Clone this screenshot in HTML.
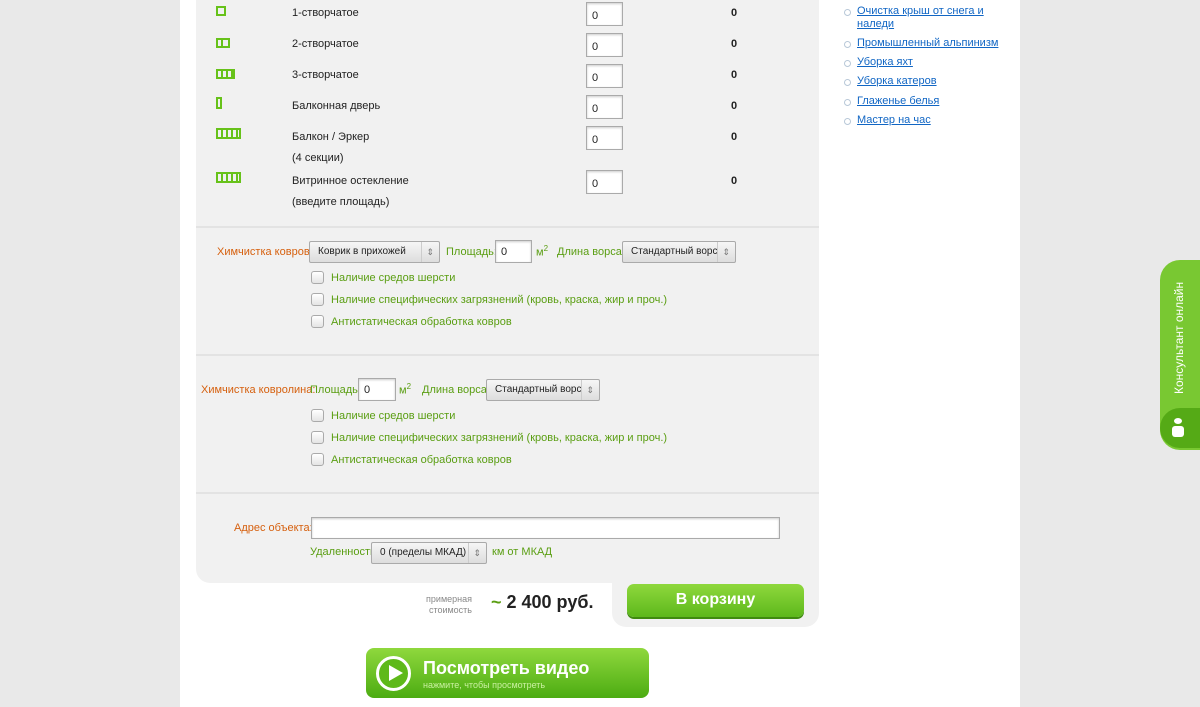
<!DOCTYPE html>
<html><head><meta charset="utf-8"><style>
*{margin:0;padding:0;box-sizing:border-box}
body{width:1200px;height:707px;overflow:hidden;background:#e9e9e9;font-family:"Liberation Sans",Arial,sans-serif;font-size:11px;color:#222;position:relative}
.a{position:absolute;white-space:nowrap}
.page{left:180px;top:0;width:840px;height:707px;background:#fff}
.panel{left:196px;top:0;width:623px;height:583px;background:#f1f1f1;border-radius:0 0 0 14px}
.tab{left:612px;top:570px;width:207px;height:57px;background:#f1f1f1;border-radius:0 0 14px 14px}
.inp{background:#fff;border:1px solid #aaa;box-shadow:inset 0 1px 2px #ccc;font-size:11px;padding:7px 5px}
.sel{background:linear-gradient(#f6f6f6,#ddd);border:1px solid #aaa;border-radius:2px;font-size:10px;padding:0 8px;line-height:20px;height:22px;color:#222}
.sel:after{content:"⇕";position:absolute;right:5px;top:0;font-size:9px;color:#777;border-left:1px solid #ccc;padding-left:4px}
.g{color:#5a9e12}.o{color:#d6600e}
.cb{width:13px;height:13px;border:1px solid #aaa;border-radius:3px;background:linear-gradient(#fff,#e4e4e4)}
.hr{left:196px;width:623px;height:2px;background:#e3e3e3}
.ic{border:2px solid #67c21a}
ul{list-style:none}
li{position:absolute;left:857px;font-size:11px;color:#1166c4;text-decoration:underline;line-height:13px}
li:before{content:"";position:absolute;left:-13px;top:4px;width:5px;height:5px;border:1px solid #b8c8d8;border-radius:50%}
</style></head><body>
<div class="a page"></div>
<div class="a panel"></div>
<div class="a tab"></div>

<div class="a ic" style="left:216px;top:6px;width:10px;height:10px"></div>
<div class="a ic" style="left:216px;top:38px;width:14px;height:10px;background:linear-gradient(90deg,transparent 3px,#67c21a 3px,#67c21a 5px,transparent 5px)"></div>
<div class="a ic" style="left:216px;top:69px;width:19px;height:10px;background:repeating-linear-gradient(90deg,transparent 0 3px,#67c21a 3px 5px)"></div>
<div class="a ic" style="left:216px;top:97px;width:6px;height:12px;border-width:2px"></div>
<div class="a ic" style="left:216px;top:128px;width:25px;height:11px;background:repeating-linear-gradient(90deg,transparent 0 3px,#67c21a 3px 5px)"></div>
<div class="a ic" style="left:216px;top:172px;width:25px;height:11px;background:repeating-linear-gradient(90deg,transparent 0 3px,#67c21a 3px 5px)"></div>

<div class="a" style="left:292px;top:7px">1-створчатое</div>
<div class="a" style="left:292px;top:38px">2-створчатое</div>
<div class="a" style="left:292px;top:69px">3-створчатое</div>
<div class="a" style="left:292px;top:100px">Балконная дверь</div>
<div class="a" style="left:292px;top:127px;line-height:21px">Балкон / Эркер<br>(4 секции)</div>
<div class="a" style="left:292px;top:171px;line-height:21px">Витринное остекление<br>(введите площадь)</div>

<div class="a inp" style="left:586px;top:2px;width:37px;height:24px">0</div>
<div class="a inp" style="left:586px;top:33px;width:37px;height:24px">0</div>
<div class="a inp" style="left:586px;top:64px;width:37px;height:24px">0</div>
<div class="a inp" style="left:586px;top:95px;width:37px;height:24px">0</div>
<div class="a inp" style="left:586px;top:126px;width:37px;height:24px">0</div>
<div class="a inp" style="left:586px;top:170px;width:37px;height:24px">0</div>
<div class="a" style="left:731px;top:7px;font-weight:bold">0</div>
<div class="a" style="left:731px;top:38px;font-weight:bold">0</div>
<div class="a" style="left:731px;top:69px;font-weight:bold">0</div>
<div class="a" style="left:731px;top:100px;font-weight:bold">0</div>
<div class="a" style="left:731px;top:131px;font-weight:bold">0</div>
<div class="a" style="left:731px;top:175px;font-weight:bold">0</div>

<div class="a hr" style="top:226px"></div>
<div class="a o" style="left:217px;top:246px">Химчистка ковров:</div>
<div class="a sel" style="left:309px;top:241px;width:131px">Коврик в прихожей</div>
<div class="a g" style="left:446px;top:246px">Площадь:</div>
<div class="a inp" style="left:495px;top:240px;width:37px;height:23px;padding:5px">0</div>
<div class="a g" style="left:536px;top:244px">м<sup style="font-size:8px">2</sup></div>
<div class="a g" style="left:557px;top:246px">Длина ворса:</div>
<div class="a sel" style="left:622px;top:241px;width:114px">Стандартный ворс</div>
<div class="a cb" style="left:311px;top:271px"></div><div class="a g" style="left:331px;top:272px">Наличие средов шерсти</div>
<div class="a cb" style="left:311px;top:293px"></div><div class="a g" style="left:331px;top:294px">Наличие специфических загрязнений (кровь, краска, жир и проч.)</div>
<div class="a cb" style="left:311px;top:315px"></div><div class="a g" style="left:331px;top:316px">Антистатическая обработка ковров</div>

<div class="a hr" style="top:354px"></div>
<div class="a o" style="left:201px;top:384px">Химчистка ковролина:</div>
<div class="a g" style="left:310px;top:384px">Площадь:</div>
<div class="a inp" style="left:358px;top:378px;width:38px;height:23px;padding:5px">0</div>
<div class="a g" style="left:399px;top:382px">м<sup style="font-size:8px">2</sup></div>
<div class="a g" style="left:422px;top:384px">Длина ворса:</div>
<div class="a sel" style="left:486px;top:379px;width:114px">Стандартный ворс</div>
<div class="a cb" style="left:311px;top:409px"></div><div class="a g" style="left:331px;top:410px">Наличие средов шерсти</div>
<div class="a cb" style="left:311px;top:431px"></div><div class="a g" style="left:331px;top:432px">Наличие специфических загрязнений (кровь, краска, жир и проч.)</div>
<div class="a cb" style="left:311px;top:453px"></div><div class="a g" style="left:331px;top:454px">Антистатическая обработка ковров</div>

<div class="a hr" style="top:492px"></div>
<div class="a o" style="left:234px;top:522px">Адрес объекта:</div>
<div class="a inp" style="left:311px;top:517px;width:469px;height:22px"></div>
<div class="a g" style="left:310px;top:546px">Удаленность</div>
<div class="a sel" style="left:371px;top:542px;width:116px">0 (пределы МКАД)</div>
<div class="a g" style="left:492px;top:546px">км от МКАД</div>

<div class="a" style="left:420px;top:594px;width:52px;text-align:right;font-size:9px;color:#888;line-height:11px;white-space:normal">примерная стоимость</div>
<div class="a" style="left:491px;top:592px;font-size:18px;font-weight:bold;color:#222"><span class="g">~</span> 2 400 руб.</div>
<div class="a" style="left:627px;top:584px;width:177px;height:33px;border-radius:7px;background:linear-gradient(#8fd83d,#5db81b);box-shadow:0 2px 0 #3f8a0f;color:#fff;font-size:16px;font-weight:bold;text-align:center;line-height:32px">В корзину</div>

<div class="a" style="left:366px;top:648px;width:283px;height:50px;border-radius:8px;background:linear-gradient(#8fd83d,#4cac12)"></div>
<div class="a" style="left:376px;top:656px;width:35px;height:35px;border-radius:50%;border:3px solid #fff;background:#5eb91a"></div>
<div class="a" style="left:389px;top:665px;width:0;height:0;border-left:14px solid #fff;border-top:8px solid transparent;border-bottom:8px solid transparent"></div>
<div class="a" style="left:423px;top:658px;color:#fff;font-size:18px;font-weight:bold">Посмотреть видео</div>
<div class="a" style="left:423px;top:680px;color:#c9f0a0;font-size:9px">нажмите, чтобы просмотреть</div>

<ul>
<li style="top:5px;width:130px">Очистка крыш от снега и наледи</li>
<li style="top:37px">Промышленный альпинизм</li>
<li style="top:56px">Уборка яхт</li>
<li style="top:75px">Уборка катеров</li>
<li style="top:95px">Глаженье белья</li>
<li style="top:114px">Мастер на час</li>
</ul>

<div class="a" style="left:1160px;top:260px;width:40px;height:190px;border-radius:20px 0 0 20px;background:#79c832"></div>
<div class="a" style="left:1160px;top:408px;width:40px;height:40px;border-radius:50% 0 0 50%;background:#55aa16"></div>
<div class="a" style="left:1174px;top:418px;width:8px;height:6px;border-radius:50%;background:#fff"></div>
<div class="a" style="left:1172px;top:426px;width:12px;height:11px;border-radius:3px;background:#fff"></div>
<div class="a" style="left:1172px;top:275px;width:18px;height:125px;writing-mode:vertical-rl;transform:rotate(180deg);color:#fff;font-size:12px;text-align:center">Консультант онлайн</div>
</body></html>
